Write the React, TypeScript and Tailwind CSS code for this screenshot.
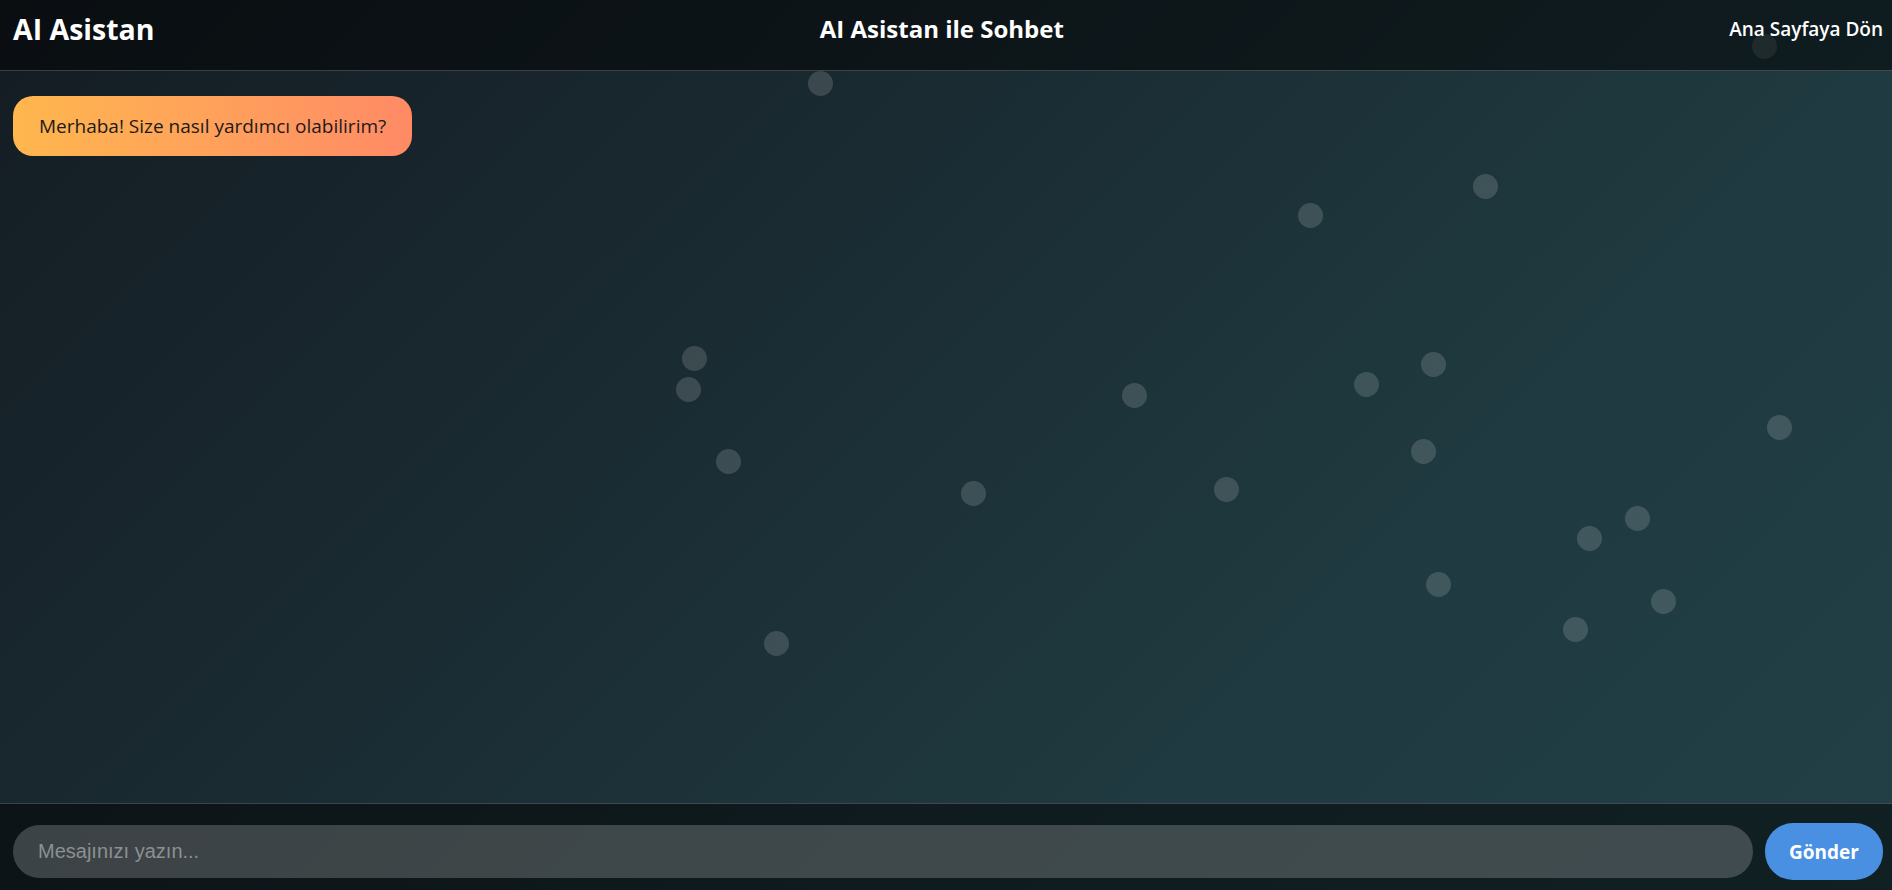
import React from "react";

const dots: [number, number][] = [
  [820, 83], [1764, 46], [1485, 186], [1310, 215], [694, 358], [688, 389],
  [1134, 395], [1366, 384], [1433, 364], [1779, 427], [728, 461], [1423, 451],
  [973, 493], [1226, 489], [1637, 518], [1589, 538], [1438, 584], [1663, 601],
  [1575, 629], [776, 643],
];

export default function App() {
  return (
    <div className="relative flex h-screen w-full flex-col overflow-hidden bg-[linear-gradient(135deg,#141c23_0%,#19282f_30%,#1f3a40_70%,#214046_100%)] font-['Open_Sans',sans-serif] text-white">
      <div className="pointer-events-none absolute inset-0 z-0">
        {dots.map(([x, y], i) => (
          <span
            key={i}
            className="absolute h-[25px] w-[25px] rounded-full bg-white/15"
            style={{ left: x - 12.5, top: y - 12.5 }}
          />
        ))}
      </div>

      <header className="relative z-10 flex h-[71px] shrink-0 items-center justify-between border-b border-white/20 bg-black/50 pb-3 pl-[13px] pr-[9px]">
        <h1 className="text-[28.5px] font-bold leading-none">AI Asistan</h1>
        <h2 className="text-[24px] font-bold leading-none">AI Asistan ile Sohbet</h2>
        <a className="text-[19px] font-semibold leading-none">Ana Sayfaya Dön</a>
      </header>

      <main className="relative z-10 flex-1 pl-[13px] pt-[25px]">
        <div className="inline-flex h-[60px] items-center rounded-[20px] bg-gradient-to-r from-[#ffb74d] to-[#ff8a65] px-[26px] text-[19px] text-[#1b1b1b]">
          Merhaba! Size nasıl yardımcı olabilirim?
        </div>
      </main>

      <footer className="relative z-10 flex h-[87px] shrink-0 items-center gap-3 border-t border-white/20 bg-black/50 pl-[13px] pr-[9px] pt-[8px]">
        <input
          placeholder="Mesajınızı yazın..."
          className="h-[53px] flex-1 rounded-full bg-white/20 px-[25px] font-['Liberation_Sans',Arial,sans-serif] text-[20px] text-white outline-none placeholder:text-[#8b9192]"
        />
        <button className="h-[57px] w-[118px] rounded-[28px] bg-[#4a90e2] pt-[3px] text-[19px] font-bold text-white">
          Gönder
        </button>
      </footer>
    </div>
  );
}
